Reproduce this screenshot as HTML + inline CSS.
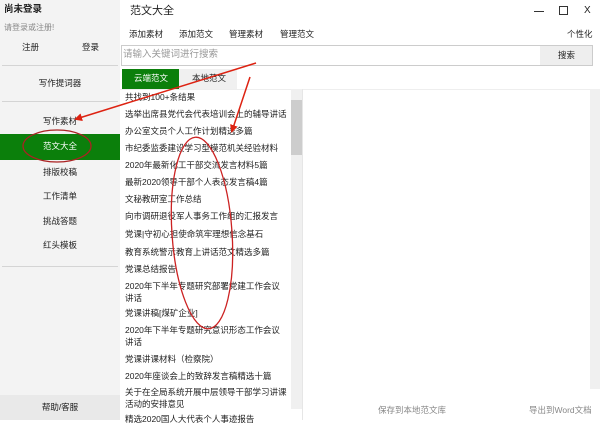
<!DOCTYPE html>
<html><head><meta charset="utf-8"><style>
*{margin:0;padding:0;box-sizing:border-box}
body{width:600px;height:420px;overflow:hidden;background:#fff;font-family:"Liberation Sans","Noto Sans CJK SC",sans-serif;font-size:8.5px;color:#222;position:relative}
.a{position:absolute;white-space:nowrap;line-height:13px}
#side{position:absolute;left:0;top:0;width:120px;height:420px;background:#f3f3f3}
.hr{position:absolute;left:2px;width:116px;height:1px;background:#d4d4d4}
.c{position:absolute;left:0;width:120px;text-align:center;line-height:13px}
.li{position:absolute;left:125px;line-height:12px;white-space:nowrap}
</style></head><body>
<div id="side">
<div class="a" style="left:4px;top:3px;font-weight:bold;font-size:9.5px">尚未登录</div>
<div class="a" style="left:4px;top:21px;color:#888;font-size:8px">请登录或注册!</div>
<div class="a" style="left:22px;top:41px">注册</div>
<div class="a" style="left:82px;top:41px">登录</div>
<div class="hr" style="top:65px"></div>
<div class="c" style="top:77px">写作提词器</div>
<div class="hr" style="top:101px"></div>
<div class="c" style="top:115px">写作素材</div>
<div style="position:absolute;left:0;top:134px;width:120px;height:26px;background:#0b7f0b"></div>
<div class="c" style="top:140px;color:#fff">范文大全</div>
<div class="c" style="top:166px">排版校稿</div>
<div class="c" style="top:190px">工作清单</div>
<div class="c" style="top:215px">挑战答题</div>
<div class="c" style="top:239px">红头模板</div>
<div class="hr" style="top:266px"></div>
<div style="position:absolute;left:0;top:395px;width:120px;height:25px;background:#e9e9e9"></div>
<div class="c" style="top:401px">帮助/客服</div>
</div>
<div class="a" style="left:130px;top:4px;font-size:11px;line-height:14px">范文大全</div>
<div style="position:absolute;left:534px;top:11px;width:10px;height:1px;background:#333"></div>
<div style="position:absolute;left:559px;top:6px;width:9px;height:9px;border:1px solid #333"></div>
<div class="a" style="left:584px;top:4px;font-size:10px">X</div>
<div class="a" style="left:129px;top:28px">添加素材</div>
<div class="a" style="left:179px;top:28px">添加范文</div>
<div class="a" style="left:229px;top:28px">管理素材</div>
<div class="a" style="left:280px;top:28px">管理范文</div>
<div class="a" style="left:567px;top:28px">个性化</div>
<div style="position:absolute;left:121px;top:45px;width:472px;height:21px;border:1px solid #ccc;background:#fff"></div>
<div style="position:absolute;left:540px;top:46px;width:52px;height:19px;background:#eee"></div>
<div class="a" style="left:558px;top:49px">搜索</div>
<div class="a" style="left:123px;top:48px;color:#999;font-size:9.5px;line-height:14px">请输入关键词进行搜索</div>
<div style="position:absolute;left:122px;top:69px;width:57px;height:20px;background:#0b7f0b"></div>
<div class="a" style="left:134px;top:72px;color:#fff">云端范文</div>
<div style="position:absolute;left:179px;top:69px;width:58px;height:20px;background:#f0f0f0"></div>
<div class="a" style="left:192px;top:72px">本地范文</div>
<div style="position:absolute;left:120px;top:89px;width:480px;height:1px;background:#eee"></div>
<div style="position:absolute;left:291px;top:89px;width:11px;height:320px;background:#f0f0f0"></div>
<div style="position:absolute;left:291px;top:100px;width:11px;height:55px;background:#cdcdcd"></div>
<div style="position:absolute;left:302px;top:89px;width:1px;height:331px;background:#e6e6e6"></div>
<div style="position:absolute;left:590px;top:89px;width:10px;height:300px;background:#f0f0f0"></div>
<div class="li" style="top:91px">共找到100+条结果</div>
<div class="li" style="top:108px">选举出席县党代会代表培训会上的辅导讲话</div>
<div class="li" style="top:125px">办公室文员个人工作计划精选多篇</div>
<div class="li" style="top:142px">市纪委监委建设学习型模范机关经验材料</div>
<div class="li" style="top:159px">2020年最新化工干部交流发言材料5篇</div>
<div class="li" style="top:176px">最新2020领导干部个人表态发言稿4篇</div>
<div class="li" style="top:193px">文秘教研室工作总结</div>
<div class="li" style="top:210px">向市调研退役军人事务工作组的汇报发言</div>
<div class="li" style="top:228px">党课|守初心担使命筑牢理想信念基石</div>
<div class="li" style="top:246px">教育系统警示教育上讲话范文精选多篇</div>
<div class="li" style="top:263px">党课总结报告</div>
<div class="li" style="top:280px">2020年下半年专题研究部署党建工作会议<br>讲话</div>
<div class="li" style="top:307px">党课讲稿[煤矿企业]</div>
<div class="li" style="top:324px">2020年下半年专题研究意识形态工作会议<br>讲话</div>
<div class="li" style="top:353px">党课讲课材料（检察院）</div>
<div class="li" style="top:370px">2020年座谈会上的致辞发言稿精选十篇</div>
<div class="li" style="top:386px">关于在全局系统开展中层领导干部学习讲课<br>活动的安排意见</div>
<div class="li" style="top:413px">精选2020国人大代表个人事迹报告</div>
<div class="a" style="left:378px;top:404px;color:#888;font-size:8.5px">保存到本地范文库</div>
<div class="a" style="left:529px;top:404px;color:#888;font-size:8.5px">导出到Word文档</div>
<svg style="position:absolute;left:0;top:0" width="600" height="420">
<defs><marker id="m" markerWidth="8" markerHeight="8" refX="6" refY="4" orient="auto" markerUnits="userSpaceOnUse"><path d="M0,0 L8,4 L0,8 z" fill="#d21"/></marker></defs>
<line x1="256" y1="63" x2="76" y2="119" stroke="#d21" stroke-width="1.5" marker-end="url(#m)"/>
<line x1="250" y1="77" x2="232" y2="131" stroke="#d21" stroke-width="1.5" marker-end="url(#m)"/>
<ellipse cx="57" cy="146" rx="34" ry="16" fill="none" stroke="#a22" stroke-width="1.3"/>
<ellipse cx="202" cy="233" rx="30" ry="96" transform="rotate(-4 202 233)" fill="none" stroke="#c22" stroke-width="1.3"/>
</svg>
</body></html>
